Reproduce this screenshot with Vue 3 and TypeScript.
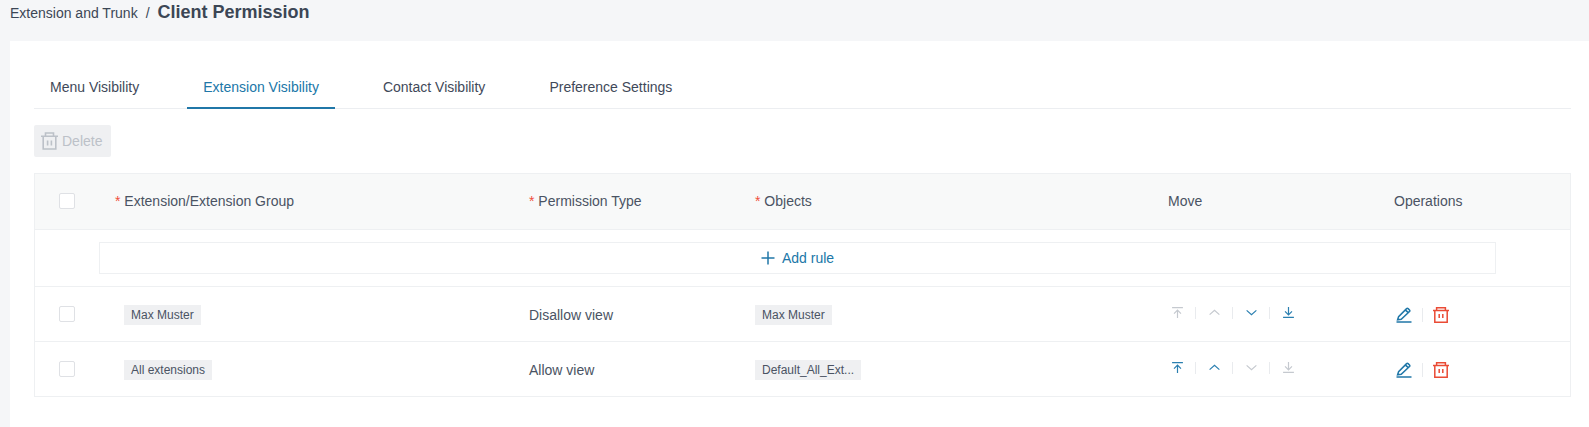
<template>
  <div class="page">
    <div class="crumbs">
      <span class="crumb-link">Extension and Trunk</span>
      <span class="crumb-sep">/</span>
      <span class="crumb-current">Client Permission</span>
    </div>

    <div class="card">
      <div class="tabs">
        <div
          v-for="tab in tabs"
          :key="tab.label"
          :class="['tab', { active: tab.label === 'Extension Visibility' }]"
        >
          {{ tab.label }}
        </div>
      </div>

      <button class="delete-btn" disabled>
        <svg class="delete-icon" viewBox="0 0 17 18" fill="none" stroke="currentColor" stroke-width="1.6">
          <path d="M0 4.2h17M4.5 4V1h8v3M2.2 4.2V17h12.6V4.2M6.6 8.5v5M10.4 8.5v5" />
        </svg>
        Delete
      </button>

      <div class="table">
        <div class="row head">
          <div class="cell-check"><span class="checkbox"></span></div>
          <div><span class="req">*</span> Extension/Extension Group</div>
          <div><span class="req">*</span> Permission Type</div>
          <div><span class="req">*</span> Objects</div>
          <div>Move</div>
          <div>Operations</div>
        </div>

        <div class="add-row">
          <div class="add-box">
            <svg class="add-icon" viewBox="0 0 14 14" fill="none" stroke="currentColor" stroke-width="1.5">
              <path d="M7 0.5v13M0.5 7h13" />
            </svg>
            Add rule
          </div>
        </div>

        <div v-for="rule in rules" :key="rule.name" class="row body">
          <div class="cell-check"><span class="checkbox"></span></div>
          <div class="name-cell"><span class="tag">{{ rule.name }}</span></div>
          <div>{{ rule.type }}</div>
          <div><span class="tag">{{ rule.object }}</span></div>
          <div class="move">
            <template v-for="(m, i) in moves" :key="m.name">
              <span v-if="i > 0" class="divider"></span>
              <span :class="['move-btn', { off: !rule.enabled.includes(m.name) }]">
                <svg viewBox="0 0 12 12" fill="none" stroke="currentColor" stroke-width="1.1">
                  <path :d="m.d" />
                </svg>
              </span>
            </template>
          </div>
          <div class="ops">
            <svg class="op-icon edit" viewBox="0 0 16 16" fill="none" stroke="currentColor" stroke-width="1.5">
              <path d="M0.5 15h15M1.6 12.8 2.6 9.6 10.6 1.6a1.1 1.1 0 0 1 1.5 0l1.4 1.4a1.1 1.1 0 0 1 0 1.5L5.2 12.2zM9.4 2.9l3 3" />
            </svg>
            <span class="divider op-divider"></span>
            <svg class="op-icon del" viewBox="0 0 16 16" fill="none" stroke="currentColor" stroke-width="1.5">
              <path d="M0 3.6h16M3.6 3.4V0.8h8.8v2.6M1.8 3.6V15.2h12.4V3.6M6.2 7v4M9.8 7v4" />
            </svg>
          </div>
        </div>
      </div>
    </div>
  </div>
</template>

<script setup lang="ts">
const tabs = [
  { label: 'Menu Visibility' },
  { label: 'Extension Visibility' },
  { label: 'Contact Visibility' },
  { label: 'Preference Settings' }
]

const moves = [
  { name: 'top', d: 'M1 1.5h10M6 11V4M2.8 7 6 3.8 9.2 7' },
  { name: 'up', d: 'M1.5 8 6 4l4.5 4' },
  { name: 'down', d: 'M1.5 4 6 8l4.5-4' },
  { name: 'bottom', d: 'M1 10.5h10M6 1v7M2.8 5 6 8.2 9.2 5' }
]

const rules = [
  { name: 'Max Muster', type: 'Disallow view', object: 'Max Muster', enabled: ['down', 'bottom'] },
  { name: 'All extensions', type: 'Allow view', object: 'Default_All_Ext...', enabled: ['top', 'up'] }
]
</script>

<style>
html,
body {
  margin: 0;
  background: #f5f6f8;
}
</style>

<style scoped>
.page {
  height: 427px;
  overflow: hidden;
  background: #f5f6f8;
  font-family: "Liberation Sans", Arial, sans-serif;
  font-size: 14px;
  color: #4a5363;
}

.crumbs {
  height: 41px;
  padding: 2px 0 0 10px;
  box-sizing: border-box;
  display: flex;
  align-items: flex-start;
  line-height: 21px;
}

.crumb-link {
  color: #3c4655;
  padding-top: 1px;
}

.crumb-sep {
  margin: 1px 8px 0 8px;
  color: #3c4655;
}

.crumb-current {
  margin-top: 1px;
  font-size: 18px;
  font-weight: 700;
  line-height: 18px;
  color: #3c4655;
}

.card {
  margin-left: 10px;
  height: 386px;
  padding: 24px 18px 0 24px;
  box-sizing: border-box;
  background: #fff;
}

.tabs {
  display: flex;
  height: 44px;
  border-bottom: 1px solid #eceef1;
  box-sizing: border-box;
}

.tab {
  height: 44px;
  line-height: 44px;
  padding: 0 16px;
  margin-right: 32px;
  box-sizing: border-box;
  color: #3f4959;
}

.tab.active {
  color: #2077a8;
  border-bottom: 2px solid #2077a8;
}

.delete-btn {
  display: flex;
  align-items: center;
  gap: 4px;
  margin-top: 16px;
  width: 77px;
  height: 32px;
  padding: 0 7px;
  box-sizing: border-box;
  border: none;
  border-radius: 2px;
  background: #eff0f2;
  color: #bcc1c8;
  font: inherit;
}

.delete-icon {
  width: 17px;
  height: 18px;
  flex: none;
}

.table {
  margin-top: 16px;
  border: 1px solid #eef0f2;
}

.row {
  display: grid;
  grid-template-columns: 80px 414px 226px 413px 226px 1fr;
  align-items: center;
  box-sizing: border-box;
}

.row.head {
  height: 56px;
  padding-bottom: 2px;
  background: #f8f9f9;
  border-bottom: 1px solid #eef0f2;
}

.row.body {
  height: 55px;
  padding-top: 1px;
  border-top: 1px solid #eef0f2;
}

.row.body .checkbox {
  margin-top: -1px;
}

.req {
  color: #f0503c;
}

.cell-check {
  padding-left: 24px;
  display: flex;
}

.checkbox {
  width: 16px;
  height: 16px;
  border: 1px solid #dfe1e5;
  border-radius: 2px;
  background: #fff;
  box-sizing: border-box;
}

.add-row {
  height: 56px;
  display: flex;
  align-items: center;
  padding: 0 0 1px 64px;
  box-sizing: border-box;
}

.add-box {
  width: 1397px;
  height: 32px;
  display: flex;
  align-items: center;
  justify-content: center;
  gap: 7px;
  border: 1px solid #eef0f2;
  box-sizing: border-box;
  color: #2077a8;
}

.add-icon {
  width: 14px;
  height: 14px;
}

.name-cell {
  padding-left: 9px;
}

.tag {
  display: inline-block;
  height: 20px;
  line-height: 20px;
  padding: 0 7px;
  background: #eff0f2;
  font-size: 12px;
  color: #4a5363;
  vertical-align: middle;
}

.move {
  display: flex;
  align-items: center;
  height: 16px;
  margin-top: -4px;
}

.move-btn {
  width: 18px;
  height: 14px;
  display: flex;
  justify-content: center;
  color: #2a7fb0;
}

.move-btn svg {
  width: 13px;
  height: 13px;
}

.move-btn.off {
  color: #c5c9cf;
}

.divider {
  width: 1px;
  height: 12px;
  margin: 0 9px;
  background: #e9ebee;
}

.ops {
  display: flex;
  align-items: center;
  padding-left: 2px;
}

.op-icon {
  width: 16px;
  height: 16px;
}

.op-icon.edit {
  color: #2077a8;
}

.op-icon.del {
  color: #ea4b35;
}

.op-divider {
  margin: 0 10px;
  height: 14px;
}
</style>
